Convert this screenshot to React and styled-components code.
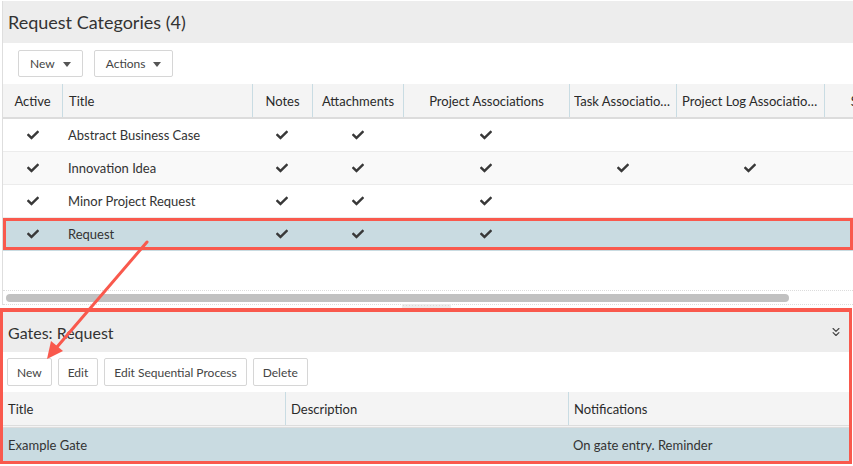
import React from "react";
import styled, { createGlobalStyle } from "styled-components";
import { FaCheck } from "react-icons/fa";
import { ChevronsDown } from "lucide-react";

const RED = "#f9594d";
const LINE = "#c9dce3";
const SELECTED = "#c9dbe1";

const GlobalStyle = createGlobalStyle`
  html, body {
    margin: 0;
    padding: 0;
    background: #fff;
  }
  body {
    font-family: "Lato", "Open Sans", sans-serif;
    color: #333;
  }
`;

const textured = `
  background-color: #f4f4f4;
  background-image: radial-gradient(#ececec 0.5px, transparent 0.7px);
  background-size: 2px 2px;
`;

const Page = styled.div`
  position: relative;
  width: 853px;
  height: 466px;
  overflow: hidden;
  padding-top: 1px;
  box-sizing: border-box;
  display: flex;
  flex-direction: column;
`;

const TopPanel = styled.section`
  margin-left: 2px;
  border-left: 1px solid #dedede;
  height: 304px;
  display: flex;
  flex-direction: column;
`;

const TitleBar = styled.div`
  height: ${props => props.h || 42}px;
  flex: none;
  background: #ededed;
  display: flex;
  align-items: center;
  justify-content: space-between;
  padding: 0 ${props => props.pr || 0}px 0 ${props => props.pl || 5}px;
  font-size: ${props => props.size || 18}px;
  color: #333;
`;

const Toolbar = styled.div`
  height: ${props => props.h || 41}px;
  flex: none;
  display: flex;
  align-items: center;
  gap: ${props => props.gap || 11}px;
  padding-left: ${props => props.pl || 15}px;
`;

const Button = styled.span`
  height: ${props => props.h || 27}px;
  box-sizing: border-box;
  display: inline-flex;
  align-items: center;
  gap: 8px;
  padding: 0 ${props => props.px || 11}px;
  border: 1px solid #d6d6d6;
  border-radius: 2px;
  background: #fff;
  font-size: 12px;
  color: #444;
  cursor: pointer;
`;

const Caret = styled.span`
  width: 0;
  height: 0;
  border-left: 4px solid transparent;
  border-right: 4px solid transparent;
  border-top: 5px solid #555;
  margin-top: 1px;
`;

const Grid = styled.div`
  display: grid;
  grid-template-columns: ${props => props.cols};
`;

const HeadRow = styled(Grid)`
  height: 33px;
  ${textured}
  border-bottom: ${props => props.double ? "3px double #ddd" : "2px solid #dcdcdc"};
`;

const HeadCell = styled.div`
  display: flex;
  align-items: center;
  justify-content: ${props => (props.left ? "flex-start" : "center")};
  padding: 0 ${props => props.px ?? 6}px;
  border-left: ${props => (props.first ? "none" : `1px solid ${LINE}`)};
  font-size: 13px;
  color: #2a2a2a;
  white-space: nowrap;
  overflow: hidden;
  min-width: 0;

  span {
    overflow: hidden;
    text-overflow: ellipsis;
  }
`;

const Row = styled(Grid)`
  height: 33px;
  box-sizing: border-box;
  border-bottom: 1px solid #ececec;
  ${props => props.striped && textured}
  ${props => props.striped && "background-color: #f9f9f9;"}
  ${props =>
    props.selected &&
    `background: ${SELECTED}; box-shadow: inset 0 0 0 3px ${RED}; border-bottom-color: transparent;`}
`;

const Cell = styled.div`
  display: flex;
  align-items: center;
  justify-content: ${props => (props.left ? "flex-start" : "center")};
  padding: 0 ${props => props.px ?? 6}px;
  font-size: 13px;
  color: #333;
  white-space: nowrap;
  min-width: 0;

  svg {
    color: #383838;
  }
`;

const Spacer = styled.div`
  flex: 1;
`;

const ScrollTrack = styled.div`
  height: 15px;
  flex: none;
  box-sizing: border-box;
  border-top: 1px dotted #dcdcdc;
  border-bottom: 1px dotted #dcdcdc;
  display: flex;
  align-items: center;
  padding-left: 3px;
`;

const ScrollThumb = styled.div`
  width: 783px;
  height: 8px;
  border-radius: 4px;
  background: #c1c1c1;
`;

const Splitter = styled.div`
  height: 3px;
  flex: none;
  display: flex;
  justify-content: center;
`;

const Grip = styled.div`
  width: 49px;
  height: 9px;
  margin-top: -1px;
  background-color: #ececec;
  background-image: radial-gradient(#d8d8d8 0.6px, transparent 0.8px);
  background-size: 3px 3px;
  position: relative;
  z-index: 1;
`;

const BottomPanel = styled.section`
  height: 156px;
  width: 852px;
  box-sizing: border-box;
  border: 3px solid ${RED};
  border-top-width: 4px;
  display: flex;
  flex-direction: column;
  position: relative;
  z-index: 2;
`;

const Arrow = styled.svg`
  position: absolute;
  left: 0;
  top: 0;
  pointer-events: none;
  z-index: 3;
`;

const topCols = "59px 190px 60px 91px 166px 107px 148px 88px";
const bottomCols = "282px 283px 1fr";

const categories = [
  { title: "Abstract Business Case", checks: [1, 1, 1, 1, 0, 0] },
  { title: "Innovation Idea", checks: [1, 1, 1, 1, 1, 1] },
  { title: "Minor Project Request", checks: [1, 1, 1, 1, 0, 0] },
  { title: "Request", checks: [1, 1, 1, 1, 0, 0] },
];

const Check = ({ on }) => (on ? <FaCheck size={12} /> : null);

const App = () => {
  return (
    <Page>
      <GlobalStyle />
      <TopPanel>
        <TitleBar>Request Categories (4)</TitleBar>
        <Toolbar>
          <Button>
            New <Caret />
          </Button>
          <Button>
            Actions <Caret />
          </Button>
        </Toolbar>
        <HeadRow cols={topCols}>
          <HeadCell first px={0}>Active</HeadCell>
          <HeadCell left>Title</HeadCell>
          <HeadCell>Notes</HeadCell>
          <HeadCell>Attachments</HeadCell>
          <HeadCell>Project Associations</HeadCell>
          <HeadCell left px={4}><span>Task Associations</span></HeadCell>
          <HeadCell left px={5}><span>Project Log Associations</span></HeadCell>
          <HeadCell>Status</HeadCell>
        </HeadRow>
        {categories.map((c, i) => (
          <Row
            key={c.title}
            cols={topCols}
            striped={i === 1}
            selected={c.title === "Request"}
          >
            <Cell px={0}>
              <Check on={c.checks[0]} />
            </Cell>
            <Cell left>{c.title}</Cell>
            {c.checks.slice(1).map((v, j) => (
              <Cell key={j}>
                <Check on={v} />
              </Cell>
            ))}
            <Cell />
          </Row>
        ))}
        <Spacer />
        <ScrollTrack>
          <ScrollThumb />
        </ScrollTrack>
      </TopPanel>
      <Splitter>
        <Grip />
      </Splitter>
      <BottomPanel>
        <TitleBar h={40} size={16} pl={5} pr={6}>
          Gates: Request
          <ChevronsDown size={14} strokeWidth={2} color="#444" />
        </TitleBar>
        <Toolbar h={40} gap={6} pl={4}>
          <Button h={28} px={9}>New</Button>
          <Button h={28} px={9}>Edit</Button>
          <Button h={28} px={9}>Edit Sequential Process</Button>
          <Button h={28} px={9}>Delete</Button>
        </Toolbar>
        <HeadRow cols={bottomCols} double>
          <HeadCell first left px={5}>Title</HeadCell>
          <HeadCell left px={5}>Description</HeadCell>
          <HeadCell left px={5}>Notifications</HeadCell>
        </HeadRow>
        <Row cols={bottomCols} style={{ background: SELECTED, borderBottom: "none" }}>
          <Cell left px={5}>Example Gate</Cell>
          <Cell left px={5} />
          <Cell left px={5}>On gate entry. Reminder</Cell>
        </Row>
      </BottomPanel>
      <Arrow width="853" height="466" viewBox="0 0 853 466">
        <line x1="147" y1="242" x2="57" y2="347" stroke={RED} strokeWidth="3" strokeLinecap="round" />
        <polygon points="47,359 51,341 63,351" fill={RED} />
      </Arrow>
    </Page>
  );
};

export default App;
